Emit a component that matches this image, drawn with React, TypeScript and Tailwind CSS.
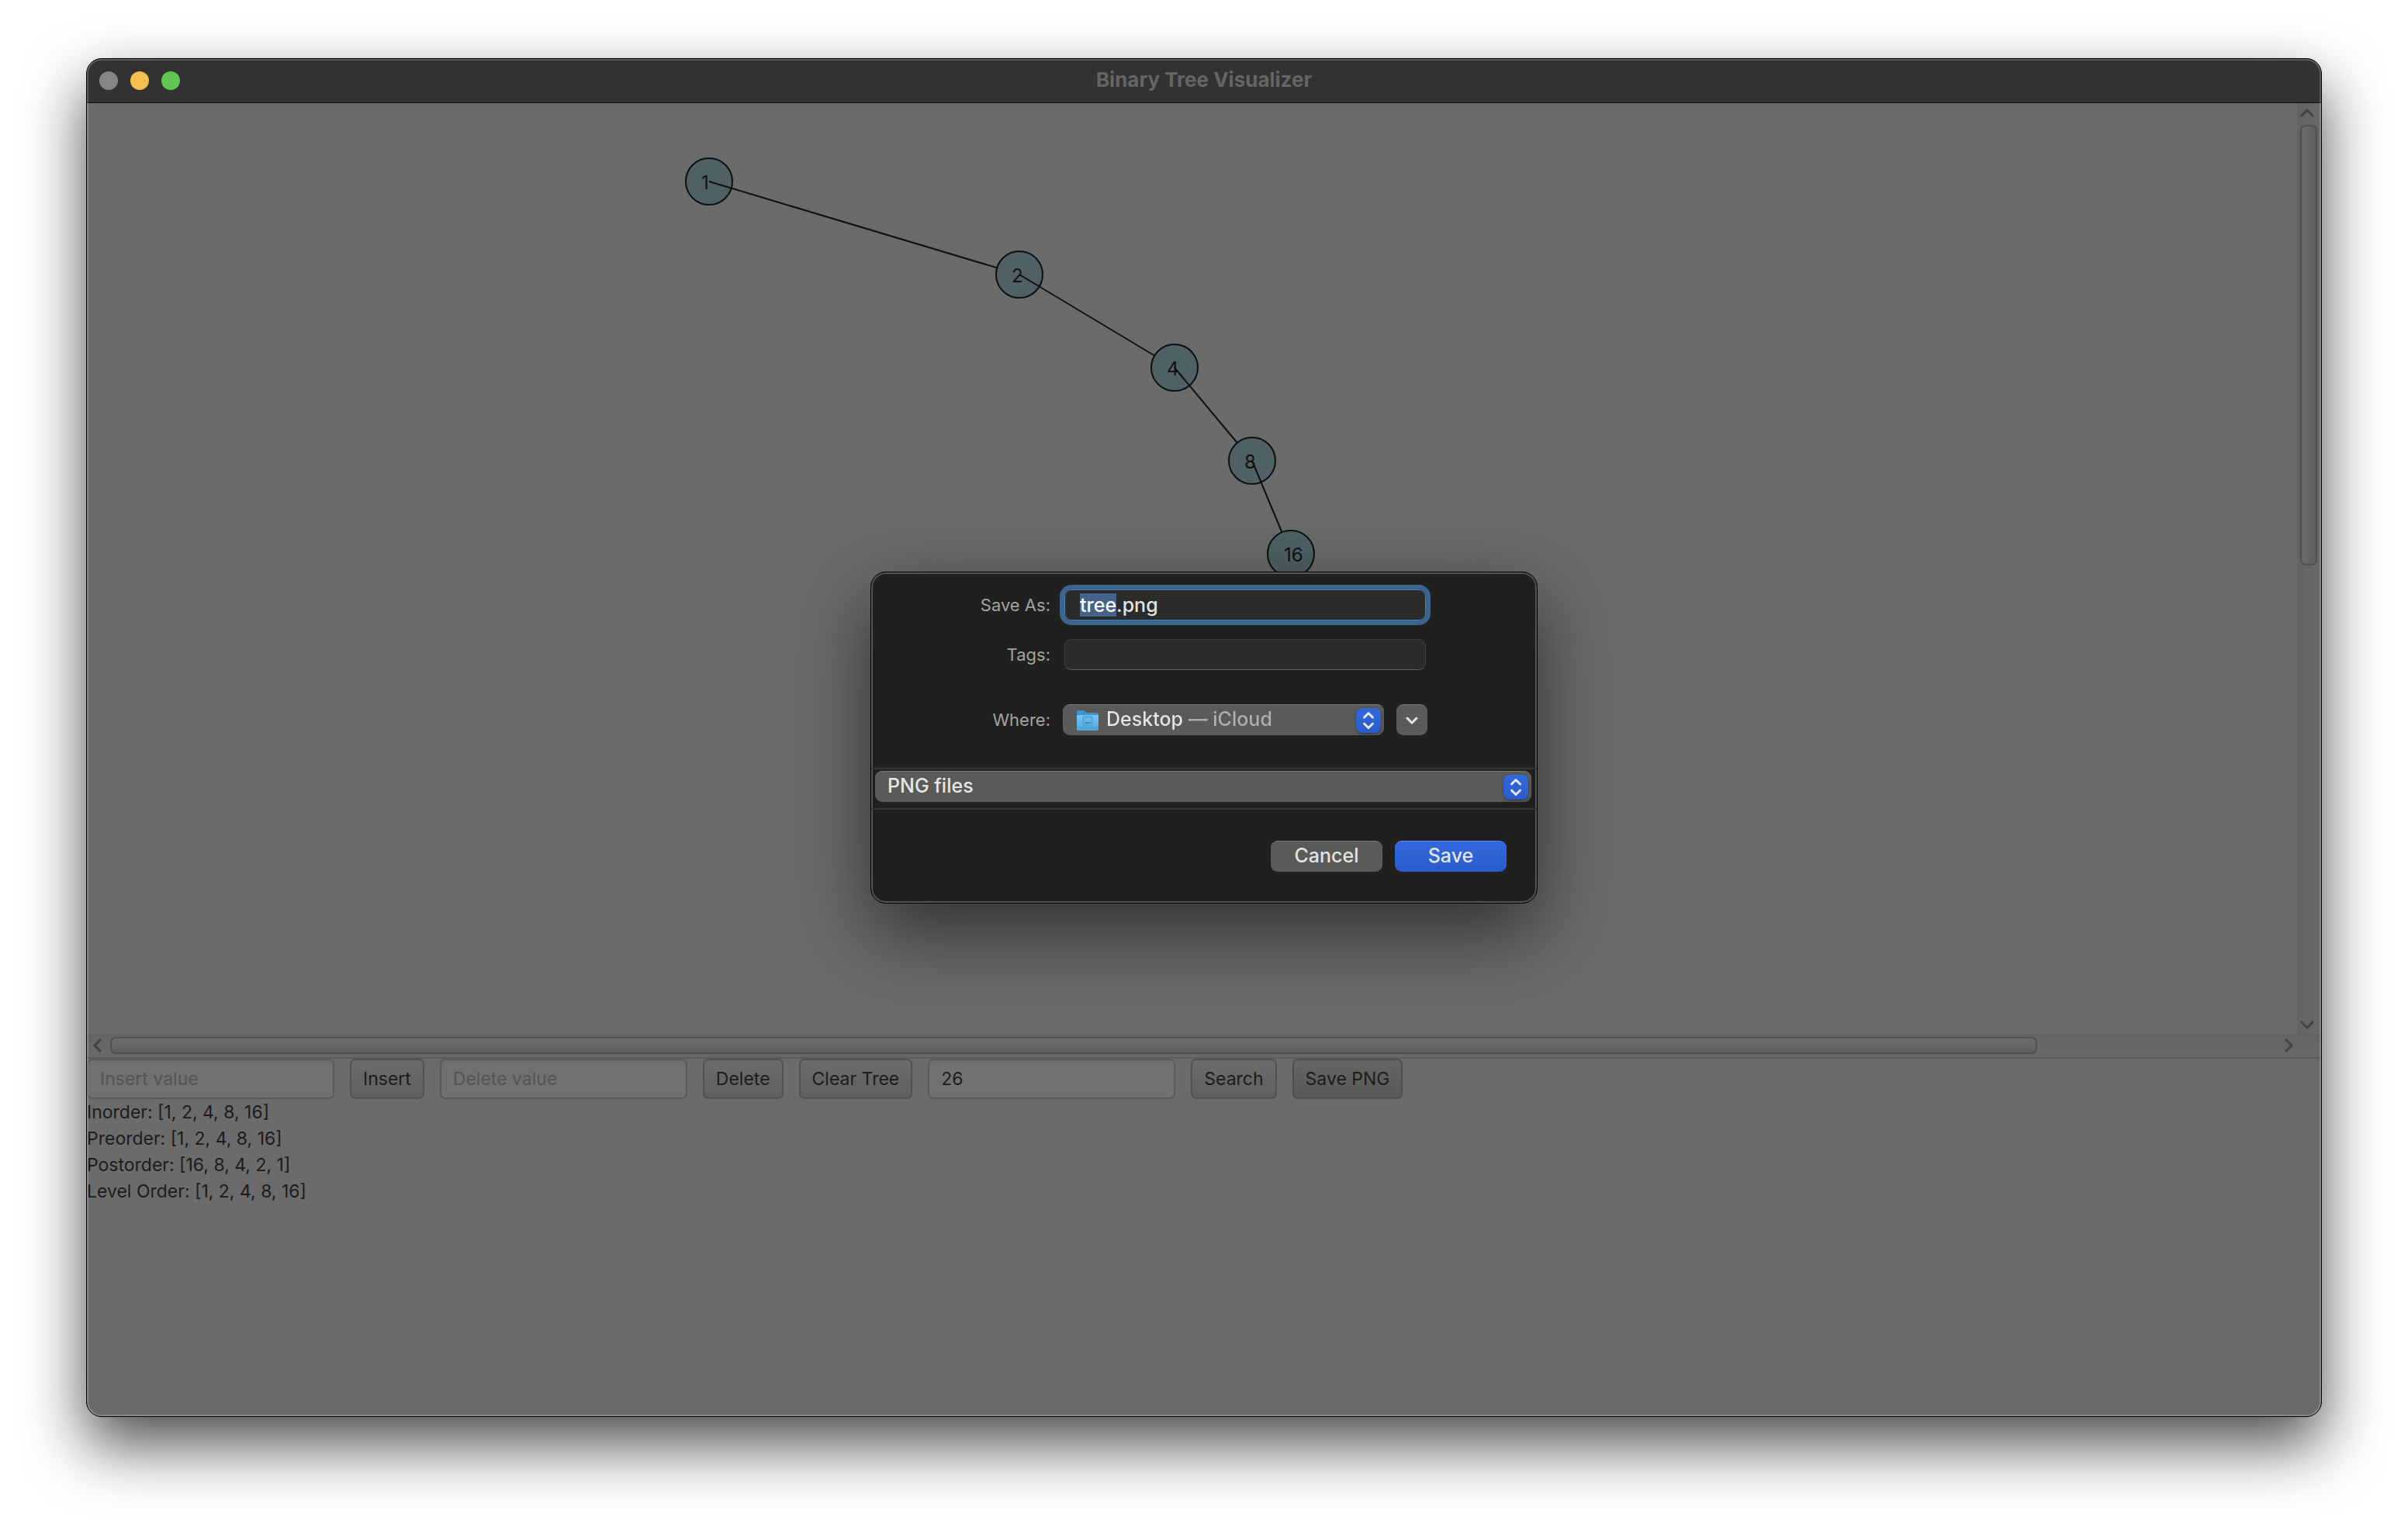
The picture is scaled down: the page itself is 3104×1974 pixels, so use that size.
import { useEffect, useRef } from "react";
import type { ReactNode } from "react";

const nodes = [
  { value: 1, x: 800, y: 100 },
  { value: 2, x: 1200, y: 220 },
  { value: 4, x: 1400, y: 340 },
  { value: 8, x: 1500, y: 460 },
  { value: 16, x: 1550, y: 580 },
];

const traversals = [
  "Inorder: [1, 2, 4, 8, 16]",
  "Preorder: [1, 2, 4, 8, 16]",
  "Postorder: [16, 8, 4, 2, 1]",
  "Level Order: [1, 2, 4, 8, 16]",
];

// Each edge starts on top of its parent and ends underneath its child.
function Tree() {
  return (
    <svg className="block h-full w-full" aria-label="Binary tree">
      {nodes.map((n, i) => {
        const next = nodes[i + 1];
        return (
          <g key={n.value}>
            <circle cx={n.x} cy={n.y} r="30" fill="#4f6165" stroke="#0f0f0f" strokeWidth="2" />
            <text x={n.value > 9 ? n.x - 9 : n.x - 10} y={n.y + 10} fill="#111111" className="text-[24px]">
              {n.value}
            </text>
            {next && <line x1={n.x} y1={n.y} x2={next.x} y2={next.y} stroke="#0f0f0f" strokeWidth="2" />}
          </g>
        );
      })}
    </svg>
  );
}

function Arrow({ points, className }: { points: string; className: string }) {
  return (
    <svg viewBox="0 0 18 18" className={className} fill="none" stroke="#434343" strokeWidth="3">
      <polyline points={points} />
    </svg>
  );
}

function FxButton({ children, armed }: { children: ReactNode; armed?: boolean }) {
  return (
    <button
      className={
        armed
          ? "h-[52px] rounded-[7px] border-2 border-[#4e4e4e] bg-linear-to-b from-[#666664] to-[#585858] px-[15px] text-[#1c1c1c]"
          : "h-[52px] rounded-[7px] border-2 border-[#525252] bg-linear-to-b from-[#6b6b6a] to-[#606060] px-[15px] text-[#1c1c1c]"
      }
    >
      {children}
    </button>
  );
}

function FxField({ label, value }: { label: string; value?: string }) {
  return (
    <input
      aria-label={label}
      placeholder={value ? undefined : label}
      defaultValue={value}
      className="h-[52px] w-[319px] rounded-[7px] border-2 border-[#5a5a5a] bg-linear-to-b from-[#6b6b6b] via-[#717171] via-15% to-[#717171] px-[15px] text-[#1c1c1c] outline-none placeholder:text-[#545454]"
    />
  );
}

function Stepper() {
  return (
    <svg
      viewBox="0 0 32 32"
      className="pointer-events-none mr-1 size-8 shrink-0 rounded-lg bg-linear-to-b from-[#3369de] to-[#2a5bcb] shadow-sm shadow-black/40"
      fill="none"
      stroke="#e4eafa"
      strokeWidth="3"
      strokeLinecap="round"
      strokeLinejoin="round"
    >
      <polyline points="10.5,12 16,6.5 21.5,12" />
      <polyline points="10.5,20 16,25.5 21.5,20" />
    </svg>
  );
}

function FolderIcon() {
  return (
    <svg viewBox="0 0 30 28" className="h-7 w-[30px] shrink-0">
      <defs>
        <linearGradient id="front" x1="0" y1="0" x2="0" y2="1">
          <stop offset="0" stopColor="#74c8f3" />
          <stop offset="1" stopColor="#4fa5dc" />
        </linearGradient>
      </defs>
      <path d="M1 3a2 2 0 0 1 2-2h7c1.500 0 2.500 3 4.500 3H27a2 2 0 0 1 2 2v4H1z" fill="#3f93cf" />
      <path d="M1 7h28v18a2 2 0 0 1-2 2H3a2 2 0 0 1-2-2z" fill="url(#front)" />
      <path d="M1 23h28" stroke="#439ad3" strokeWidth="1" />
      <rect x="9" y="9" width="12" height="11" rx="1.500" fill="#66b5e4" stroke="#3f92c8" strokeWidth="1" />
      <path d="M11 17h8" stroke="#3580b5" strokeWidth="1.500" />
    </svg>
  );
}

function SaveDialog() {
  const nameRef = useRef<HTMLInputElement>(null);
  useEffect(() => {
    nameRef.current?.focus();
    nameRef.current?.setSelectionRange(0, 4);
  }, []);
  return (
    <form
      role="dialog"
      aria-label="Save"
      className="w-[860px] overflow-hidden rounded-[20px] border border-black bg-[#20201f] text-[25px] font-medium text-[#e3e3e3] shadow-[0_36px_100px_rgba(0,0,0,0.55),inset_0_0_0_2px_#555554]"
    >
      <div className="grid grid-cols-[231px_470px] items-center gap-x-4 pt-[22px]">
        <label htmlFor="name" className="text-right text-[22px] font-normal text-[#a2a2a1]">
          Save As:
        </label>
        <input
          id="name"
          ref={nameRef}
          defaultValue="tree.png"
          className="ml-[2px] h-10 w-[466px] rounded-[9px] border border-[#4d7fae] bg-[#2b2b2a] px-[19px] outline-6 outline-[#39658f] selection:bg-[#466289] selection:text-white"
        />
        <label htmlFor="tags" className="mt-6 text-right text-[22px] font-normal text-[#a2a2a1]">
          Tags:
        </label>
        <input
          id="tags"
          className="mt-6 ml-[2px] h-10 w-[466px] rounded-[9px] border border-[#3d3d3c] border-b-[#5a5a59] bg-[#2b2b2a] px-4"
        />
        <label htmlFor="where" className="mt-11 text-right text-[22px] font-normal text-[#a2a2a1]">
          Where:
        </label>
        <div className="mt-11 flex h-10 gap-4">
          <div className="flex h-10 flex-1 items-center rounded-[9px] border-t border-[#7a7a78] bg-[#5a5a58] pl-[17px]">
            <FolderIcon />
            <select
              id="where"
              className="-mr-9 h-10 flex-1 appearance-none bg-linear-to-r from-[#e6e6e5] from-[114px] to-[#afafad] to-[114px] bg-clip-text pb-[2px] pl-[9px] text-transparent outline-none"
            >
              <option>Desktop — iCloud</option>
            </select>
            <Stepper />
          </div>
          <button
            type="button"
            aria-label="Show more options"
            className="flex size-10 items-center justify-center rounded-[9px] border-t border-[#7a7a78] bg-[#5a5a58]"
          >
            <svg
              viewBox="0 0 16 16"
              className="size-4"
              fill="none"
              stroke="#e6e6e5"
              strokeWidth="3"
              strokeLinecap="round"
              strokeLinejoin="round"
            >
              <polyline points="2,5 8,11 14,5" />
            </svg>
          </button>
        </div>
      </div>
      <div className="mt-[42px] border-y-2 border-[#363635] pt-[2px] pr-[7px] pb-2 pl-[5px]">
        <div className="flex h-10 items-center rounded-[9px] border-t border-[#7a7a78] bg-[#5a5a58]">
          <select
            aria-label="File type"
            className="-mr-9 h-10 flex-1 appearance-none bg-transparent pb-[2px] pl-4 text-[#e6e6e5] outline-none"
          >
            <option>PNG files</option>
          </select>
          <Stepper />
        </div>
      </div>
      <div className="flex justify-end gap-4 py-10 pr-[39px]">
        <button type="button" className="h-10 w-36 rounded-[9px] border-t border-[#7a7a78] bg-[#5a5a58] pb-[2px]">
          Cancel
        </button>
        <button
          type="button"
          className="h-10 w-36 rounded-[9px] border-t border-[#5c8bee] bg-linear-to-b from-[#3369de] to-[#2a5bcb] pb-[2px]"
        >
          Save
        </button>
      </div>
    </form>
  );
}

export default function App() {
  return (
    <div className="flex min-h-screen overflow-hidden bg-white px-[111px] pt-[75px] pb-[147px] font-['Inter',sans-serif]">
      <main className="relative flex flex-1 flex-col overflow-hidden rounded-[20px] border border-black bg-[#6b6b6b] shadow-[0_36px_80px_rgba(0,0,0,0.7)]">
        <header className="grid h-[57px] shrink-0 grid-cols-3 items-center border-b border-[#0c0c0c] bg-[#323232] px-4">
          <div className="flex gap-4">
            <button aria-label="Close" className="size-6 rounded-full bg-[#868684]" />
            <button aria-label="Minimize" className="size-6 rounded-full bg-[#f5bf4f]" />
            <button aria-label="Zoom" className="size-6 rounded-full bg-[#61c554]" />
          </div>
          <h1 className="pb-[2px] text-center text-[26px] leading-8 font-bold text-[#656563]">Binary Tree Visualizer</h1>
        </header>

        <section className="flex h-[1232px] shrink-0 flex-col border-b-2 border-[#5a5a5a]">
          <div className="flex min-h-0 flex-1">
            <div className="flex-1 pt-px pl-[2px]">
              <Tree />
            </div>
            <div className="flex w-[31px] flex-col items-start border-l-2 border-[#626262] bg-linear-to-r from-[#636362] to-[#696969] pl-[2px]">
              <Arrow points="1,13 9,5 17,13" className="mt-1 size-[18px]" />
              <div className="mt-[6px] h-[568px] w-[22px] rounded-[7px] border-2 border-[#505050] bg-linear-to-r from-[#6b6b6a] to-[#5f5f5e]" />
              <Arrow points="1,5 9,13 17,5" className="mt-auto mb-1 size-[18px]" />
            </div>
          </div>
          <div className="flex h-[29px] items-center border-t-2 border-[#626262] bg-linear-to-b from-[#656565] to-[#696969] pr-[33px] pb-[3px] pl-[5px]">
            <Arrow points="13,1 5,9 13,17" className="size-[18px]" />
            <div className="ml-[7px] h-[22px] w-[2484px] rounded-[7px] border-2 border-[#505050] bg-linear-to-b from-[#6b6b6a] to-[#5f5f5e]" />
            <Arrow points="5,1 13,9 5,17" className="ml-auto size-[18px]" />
          </div>
        </section>

        <section className="text-[23px]">
          <div className="flex gap-5">
            <FxField label="Insert value" />
            <FxButton>Insert</FxButton>
            <FxField label="Delete value" />
            <FxButton>Delete</FxButton>
            <FxButton>Clear Tree</FxButton>
            <FxField label="Search value" value="26" />
            <FxButton>Search</FxButton>
            <FxButton armed>Save PNG</FxButton>
          </div>
          <div className="leading-[34px] text-[#1c1c1c]">
            {traversals.map((t) => (
              <p key={t}>{t}</p>
            ))}
          </div>
        </section>

        <div className="pointer-events-none absolute inset-0 rounded-[19px] border-2 border-white/20" />
        <div className="absolute inset-0 flex items-center justify-center">
          <SaveDialog />
        </div>
      </main>
    </div>
  );
}
